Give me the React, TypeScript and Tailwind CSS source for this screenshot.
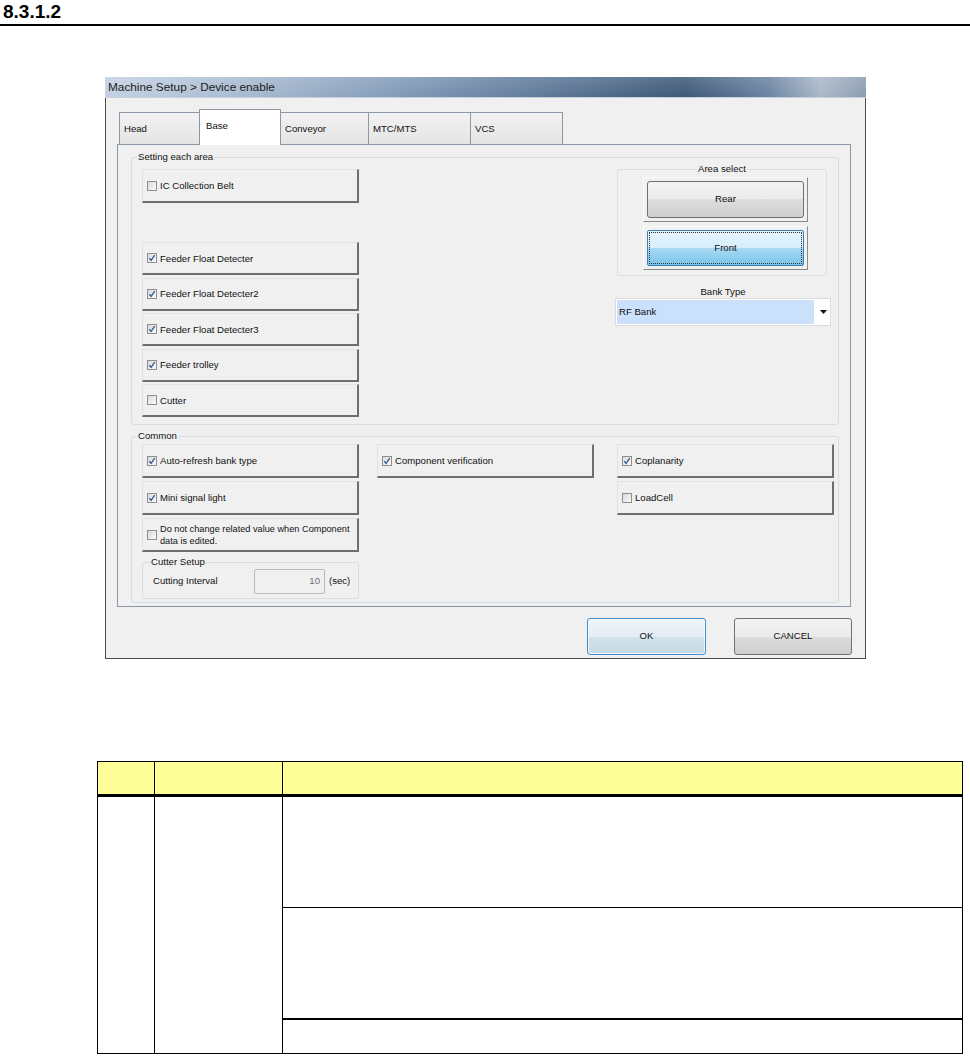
import React from "react";

type CheckProps = { checked?: boolean };

// small win7-style checkbox square
const CheckBox: React.FC<CheckProps> = ({ checked }) => (
  <span className="w-[10px] h-[10px] shrink-0 border border-[#8f8f8f] bg-[linear-gradient(135deg,#d9d9d9,#fbfbfb)] flex items-center justify-center">
    {checked && (
      <svg width="8" height="8" viewBox="0 0 8 8">
        <path d="M1.3 4.3 L3.1 6.3 L6.7 1.1" stroke="#3f5c98" strokeWidth="1.4" fill="none" />
      </svg>
    )}
  </span>
);

type PanelProps = {
  label: React.ReactNode;
  checked?: boolean;
  className?: string;
};

// raised panel holding a checkbox, like the ones in the dialog
const CheckPanel: React.FC<PanelProps> = ({ label, checked, className = "" }) => (
  <div
    className={`flex items-center gap-[3px] pl-[4px] bg-[#f0f0f0] border-t border-l border-t-[#e2e2e2] border-l-[#e2e2e2] border-r-2 border-b-2 border-r-[#6e6e6e] border-b-[#6e6e6e] ${className}`}
  >
    <CheckBox checked={checked} />
    <span className="leading-[11px] text-[#111] whitespace-nowrap">{label}</span>
  </div>
);

const tabs = [
  { name: "Head", w: "w-[81px]" },
  { name: "Base", w: "w-[82px]", active: true },
  { name: "Conveyor", w: "w-[89px]" },
  { name: "MTC/MTS", w: "w-[103px]" },
  { name: "VCS", w: "w-[93px]" },
];

const DeviceEnableWindow: React.FC = () => {
  return (
    <div className="w-[761px] h-[582px] flex flex-col text-[9.6px] text-[#111]">
      {/* title bar */}
      <div className="h-[21px] shrink-0 flex items-center pl-[3px] border-b border-[#c7d1dc] bg-[linear-gradient(180deg,rgba(255,255,255,0.14),rgba(255,255,255,0)),linear-gradient(90deg,#c3d1e2_0%,#a9bbd1_18%,#839bb9_38%,#5e7899_58%,#3e5878_76%,#6a83a2_87%,#aab8c8_94%,#8c9cb1_100%)]">
        <span className="text-[11.8px] leading-[14px] text-[#1b1b1b]">Machine Setup &gt; Device enable</span>
      </div>

      {/* client area */}
      <div className="flex-1 flex flex-col bg-[#f0f0f0] border-l border-r border-b border-[#4b4b4b] pl-[11px] pr-[14px] pt-[11px]">
        {/* tab headers */}
        <div className="flex items-end h-[35px] pl-[2px]">
          {tabs.map((t, i) =>
            t.active ? (
              <div
                key={t.name}
                className={`${t.w} h-[36px] -mb-px -ml-px relative z-10 bg-white border border-b-0 border-[#8c97a5] pl-[6px] pt-[10px] leading-[12px]`}
              >
                {t.name}
              </div>
            ) : (
              <div
                key={t.name}
                className={`${t.w} h-[32px] ${i > 0 ? "-ml-px" : ""} border border-b-0 border-[#8c97a5] bg-[linear-gradient(180deg,#f2f2f2,#e4e4e4)] pl-[4px] pt-[10px] leading-[12px]`}
              >
                {t.name}
              </div>
            )
          )}
        </div>

        {/* tab page */}
        <div className="h-[463px] border border-[#8c97a5] bg-[#f0f0f0] pl-[13px] pr-[11px] pt-[12px] flex flex-col">
          {/* Setting each area */}
          <div className="h-[268px] border border-[#d6dde3] rounded-[3px] flex flex-col pl-[10px] pr-[7px]">
            <span className="self-start -mt-[7px] ml-[-5px] px-[1px] bg-[#f0f0f0] leading-[12px]">Setting each area</span>
            <div className="flex mt-[6px]">
              <div className="w-[217px] flex flex-col">
                <CheckPanel label="IC Collection Belt" className="h-[34px]" />
                <div className="flex flex-col gap-[2.5px] mt-[39px]">
                  <CheckPanel label="Feeder Float Detecter" checked className="h-[33px]" />
                  <CheckPanel label="Feeder Float Detecter2" checked className="h-[33px]" />
                  <CheckPanel label="Feeder Float Detecter3" checked className="h-[33px]" />
                  <CheckPanel label="Feeder trolley" checked className="h-[33px]" />
                  <CheckPanel label="Cutter" className="h-[33px]" />
                </div>
              </div>

              <div className="ml-auto w-[216px] flex flex-col">
                {/* Area select */}
                <div className="ml-[2px] w-[210px] h-[107px] border border-[#dadfe3] rounded-[3px] flex flex-col items-center">
                  <span className="-mt-[7px] px-[1px] bg-[#f0f0f0] leading-[12px]">Area select</span>
                  <div className="self-start ml-[25px] mt-[2px] flex flex-col gap-[4px]">
                    <div className="w-[165px] h-[45px] p-[3px] border border-t-[#fafafa] border-l-[#fafafa] border-r-[#8a8a8a] border-b-[#8a8a8a]">
                      <div className="h-full border border-[#707070] rounded-[3px] bg-[linear-gradient(180deg,#f2f2f2_0%,#ebebeb_50%,#dddddd_50%,#cfcfcf_100%)] flex items-center justify-center">
                        Rear
                      </div>
                    </div>
                    <div className="w-[165px] h-[44px] p-[3px] border border-t-[#fafafa] border-l-[#fafafa] border-r-[#8a8a8a] border-b-[#8a8a8a]">
                      <div className="h-full border border-[#3c7fb1] rounded-[2px] bg-[linear-gradient(180deg,#e6f5fd_0%,#d6eefb_50%,#a9daf4_50%,#79c3ea_100%)] p-[1px]">
                        <div className="h-full border border-dotted border-[#333] flex items-center justify-center">
                          Front
                        </div>
                      </div>
                    </div>
                  </div>
                </div>

                {/* Bank type */}
                <span className="self-center mt-[10px] leading-[12px]">Bank Type</span>
                <div className="mt-0 h-[28px] border border-[#dcdcdc] bg-white flex items-center p-[1px]">
                  <div className="w-[197px] h-full bg-[#cbe0fb] flex items-center pl-[2px]">RF Bank</div>
                  <svg className="ml-[6px]" width="7" height="4" viewBox="0 0 7 4">
                    <path d="M0 0 H7 L3.5 4 Z" fill="#111" />
                  </svg>
                </div>
              </div>
            </div>
          </div>

          {/* Common */}
          <div className="mt-[11px] h-[167px] border border-[#d6dde3] rounded-[3px] flex flex-col pl-[10px]">
            <span className="self-start -mt-[7px] ml-[-5px] px-[1px] bg-[#f0f0f0] leading-[12px]">Common</span>
            <div className="flex mt-[2px]">
              <div className="w-[217px] flex flex-col gap-[3px]">
                <CheckPanel label="Auto-refresh bank type" checked className="h-[34px]" />
                <CheckPanel label="Mini signal light" checked className="h-[34px]" />
                <CheckPanel
                  label={
                    <span className="text-[9.2px]">
                      Do not change related value when Component
                      <br />
                      data is edited.
                    </span>
                  }
                  className="h-[34px]"
                />
                {/* Cutter Setup */}
                <div className="mt-[7px] h-[37px] border border-[#dcdcdc] rounded-[3px] flex flex-col">
                  <span className="self-start -mt-[7px] ml-[7px] px-[1px] bg-[#f0f0f0] leading-[12px]">Cutter Setup</span>
                  <div className="flex items-center mt-[1px] pl-[10px]">
                    <span className="w-[101px]">Cutting Interval</span>
                    <div className="w-[71px] h-[25px] border border-[#b9b9b9] rounded-[2px] bg-[#f0f0f0] flex items-center justify-end pr-[4px] text-[#6d6d6d]">
                      10
                    </div>
                    <span className="ml-[4px]">(sec)</span>
                  </div>
                </div>
              </div>
              <div className="ml-[18px] w-[217px] flex flex-col">
                <CheckPanel label="Component verification" checked className="h-[34px]" />
              </div>
              <div className="ml-[23px] w-[217px] flex flex-col gap-[3px]">
                <CheckPanel label="Coplanarity" checked className="h-[34px]" />
                <CheckPanel label="LoadCell" className="h-[34px]" />
              </div>
            </div>
          </div>
        </div>

        {/* dialog buttons */}
        <div className="flex justify-end gap-[28px] mt-[11px] -mr-px">
          <button className="w-[119px] h-[37px] border border-[#3d8fcf] rounded-[3px] bg-[linear-gradient(180deg,#eef5fa_0%,#e3edf4_50%,#d2e2eb_50%,#c8dae5_100%)] shadow-[inset_0_0_0_1px_rgba(255,255,255,0.7)] text-[9.6px] text-[#111]">
            OK
          </button>
          <button className="w-[118px] h-[37px] border border-[#707070] rounded-[3px] bg-[linear-gradient(180deg,#f2f2f2_0%,#ebebeb_50%,#dddddd_50%,#cfcfcf_100%)] text-[9.6px] text-[#111]">
            CANCEL
          </button>
        </div>
      </div>
    </div>
  );
};

export default function App() {
  return (
    <div className="w-[970px] h-[1058px] bg-white overflow-hidden font-['Liberation_Sans',Arial,sans-serif]">
      <div className="h-[24px] pl-[3px] pt-[2px] text-[19px] leading-[19px] font-bold text-black">8.3.1.2</div>
      <div className="h-[2px] bg-black" />

      <div className="ml-[105px] mt-[51px]">
        <DeviceEnableWindow />
      </div>

      {/* description table */}
      <div className="ml-[97px] mt-[102px] w-[866px] border-[1.5px] border-black">
        <div className="grid grid-cols-[57px_128px_1fr] h-[35px] bg-[#ffff99] border-b-[3px] border-black">
          <div className="border-r-[1.5px] border-black" />
          <div className="border-r-[1.5px] border-black" />
          <div />
        </div>
        <div className="grid grid-cols-[57px_128px_1fr]">
          <div className="border-r-[1.5px] border-black" />
          <div className="border-r-[1.5px] border-black" />
          <div className="flex flex-col">
            <div className="h-[111px] border-b-[1.5px] border-black" />
            <div className="h-[112px] border-b-[2.5px] border-black" />
            <div className="h-[33px]" />
          </div>
        </div>
      </div>
    </div>
  );
}
